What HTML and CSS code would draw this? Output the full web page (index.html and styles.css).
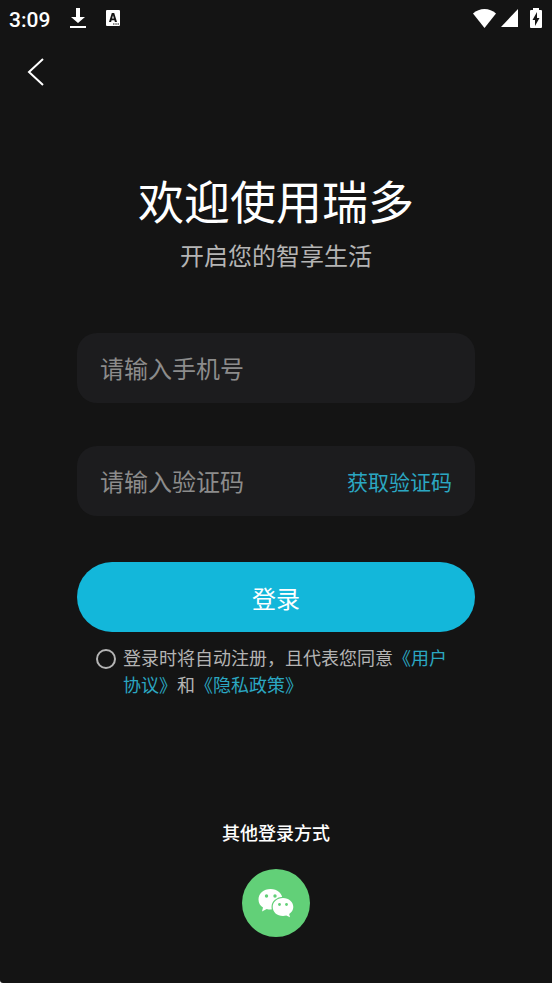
FILE: index.html
```html
<!DOCTYPE html>
<html lang="zh-CN">
<head>
<meta charset="utf-8">
<meta name="viewport" content="width=device-width, initial-scale=1">
<title>登录</title>
<link rel="stylesheet" href="styles.css">
</head>
<body>
<div class="screen">
  <div class="status">
    <div class="status-group status-left">
      <span class="clock">3:09</span>
      <svg class="icon-download" width="16" height="22" viewBox="0 0 16 22" aria-hidden="true"><path d="M6 1h4v9h5l-7 6-7-6h5zM0 19h16v2H0z"/></svg>
      <svg width="14" height="16" viewBox="0 0 14 16" aria-hidden="true"><rect width="14" height="16" rx="1"/><path class="cut" fill-rule="evenodd" d="M5.800 3h2.400L11 12H8.900l-.5-1.700H5.600L5.100 12H3zM7 5.200 6.100 8.600h1.800zM7 13.500h1.500v1H7zM9.300 13.500h1.500v1H9.300zM11.500 13.500H13v1h-1.500z"/></svg>
    </div>
    <div class="status-group status-right">
      <svg width="23" height="19" viewBox="0 0 24 19" preserveAspectRatio="none" aria-hidden="true"><path d="M0 4.500C3.500 1.500 7.500 0 12 0s8.500 1.500 12 4.500L12 19z"/></svg>
      <svg width="17" height="18" viewBox="0 0 17 18" aria-hidden="true"><path d="M17 0v18H0z"/></svg>
      <svg class="icon-battery" width="12" height="20" viewBox="0 0 12 20" aria-hidden="true"><path d="M3 0h6v2h2q1 0 1 1v16q0 1-1 1H1q-1 0-1-1V3q0-1 1-1h2z"/><path class="cut" d="M7 4 2.500 12H5v6l4.500-8H7z"/></svg>
    </div>
  </div>

  <button class="back" type="button" aria-label="返回">
    <svg width="18" height="30" viewBox="0 0 18 30"><path d="M16 2 2 15l14 13"/></svg>
  </button>

  <main class="content">
    <h1>欢迎使用瑞多</h1>
    <p class="subtitle">开启您的智享生活</p>

    <form class="form">
      <div class="field">
        <input type="tel" placeholder="请输入手机号" aria-label="手机号">
      </div>
      <div class="field">
        <input type="text" placeholder="请输入验证码" aria-label="验证码">
        <button class="code" type="button">获取验证码</button>
      </div>
      <button class="login" type="submit">登录</button>
      <div class="agreement">
        <input type="radio" id="agree">
        <p><label for="agree">登录时将自动注册，且代表您同意</label><a href="#">《用户协议》</a>和<a href="#">《隐私政策》</a></p>
      </div>
    </form>

    <section class="other">
      <h2>其他登录方式</h2>
      <button class="wechat" type="button" aria-label="微信登录">
        <svg width="36" height="30" viewBox="0 0 36 30" aria-hidden="true">
          <path class="bubble" d="M12.500 1C5.600 1 0.500 5.500 0.500 11.500c0 3.500 1.700 6.200 4.500 8L4 23.500l4.700-2.400c1.300.4 2.500.5 3.800.5 6.900 0 12-4.500 12-10.300S19.400 1 12.500 1z"/>
          <ellipse class="ring" cx="25" cy="19" rx="11.500" ry="10.300"/>
          <path class="bubble" d="M25 10C19 10 14.700 14 14.700 19S19 28 25 28c1.200 0 2.300-.2 3.300-.5L32 29.200l-.8-3.200c2.500-1.700 4.100-4.200 4.100-7C35.300 14 31 10 25 10z"/>
          <g class="eyes"><circle cx="8.500" cy="8" r="1.700"/><circle cx="17" cy="8" r="1.700"/><circle cx="21.500" cy="16.500" r="1.400"/><circle cx="28.500" cy="16.500" r="1.400"/></g>
        </svg>
      </button>
    </section>
  </main>
</div>
</body>
</html>
```

FILE: styles.css
```css
* { box-sizing: border-box; }

html { background: #fff; }

body {
  margin: 0;
  color: #fff;
  font-family: "Noto Sans CJK SC", "Noto Sans", sans-serif;
}

button, input { font-family: inherit; }

button {
  padding: 0;
  border: 0;
  background: none;
  color: inherit;
  cursor: pointer;
}

svg { display: block; }

a { color: #2ba7c2; text-decoration: none; }

h1, h2, p { margin: 0; font-weight: 400; }

.screen {
  min-height: 100vh;
  background: #141414;
  border-bottom-left-radius: 3px;
}

.status {
  display: flex;
  justify-content: space-between;
  height: 36px;
  padding: 0 10px 0 9px;
  fill: #fff;
}

.status-group { display: flex; align-items: center; }
.status-left { gap: 20px; }
.status-right { gap: 5px; }
.icon-battery { margin-left: 7px; }
.cut { fill: #141414; }

.clock {
  padding-top: 4px;
  font: 500 21px/32px Roboto, sans-serif;
}

.back {
  display: block;
  margin: 21px 0 0 27px;
}

.back path {
  fill: none;
  stroke: #fff;
  stroke-width: 2;
}

.content {
  display: flex;
  flex-direction: column;
  padding: 80px 77px 46px;
  text-align: center;
}

h1 { font-size: 46px; line-height: 64px; }

.subtitle {
  margin-top: 6px;
  color: #b4b4b4;
  font-size: 24px;
  line-height: 36px;
}

.form { margin-top: 60px; }

.field {
  display: flex;
  align-items: center;
  height: 70px;
  margin-bottom: 43px;
  padding: 0 23px;
  border-radius: 20px;
  background: #1c1c1e;
}

.field input {
  flex: 1;
  min-width: 0;
  padding: 0;
  border: 0;
  outline: 0;
  background: none;
  color: #fff;
  font-size: 24px;
  line-height: 36px;
}

.field input::placeholder { color: #8c8c8c; opacity: 1; }

.code { color: #2ba7c2; font-size: 21px; line-height: 36px; }

.login {
  display: block;
  width: 100%;
  height: 70px;
  margin-top: 46px;
  border-radius: 35px;
  background: #13b7da;
  font-size: 24px;
}

.agreement {
  display: flex;
  align-items: flex-start;
  gap: 7px;
  margin-top: 12px;
  padding: 0 22px 0 19px;
  color: #b4b4b4;
  font-size: 18px;
  line-height: 27px;
  text-align: left;
}

.agreement input {
  flex: none;
  width: 20px;
  height: 20px;
  margin: 5px 0 0;
  appearance: none;
  border: 2px solid #b4b4b4;
  border-radius: 50%;
}

.agreement input:checked { background: #13b7da; }

.other {
  display: flex;
  flex-direction: column;
  align-items: center;
  gap: 23px;
  margin-top: 120px;
}

h2 { font-size: 18px; font-weight: 500; line-height: 28px; }

.wechat {
  display: grid;
  place-items: center;
  width: 68px;
  height: 68px;
  border-radius: 50%;
  background: #62d078;
}

.bubble { fill: #fff; }
.ring, .eyes { fill: #62d078; }
```
